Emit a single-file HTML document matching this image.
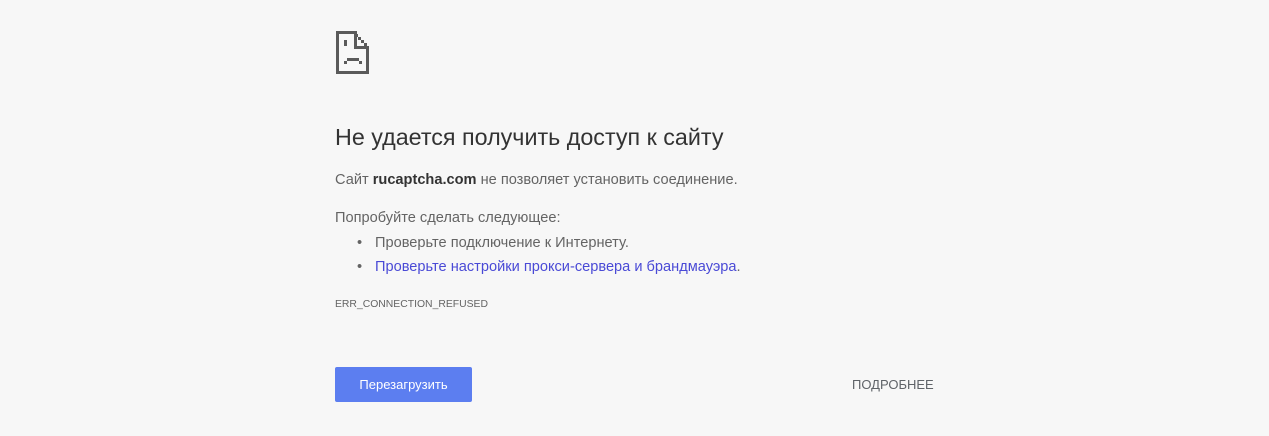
<!DOCTYPE html>
<html><head><meta charset="utf-8"><style>
body{margin:0;background:#f7f7f7;width:1269px;height:436px;overflow:hidden;font-family:"Liberation Sans",sans-serif;color:#646464;position:relative}
.a{position:absolute;white-space:nowrap}
h1{position:absolute;left:335px;top:124px;margin:0;font-weight:normal;font-size:23.3px;color:#333}
.t{font-size:14.6px}
a{color:#4a4ad6;text-decoration:none}
.btn{position:absolute;left:335px;top:367px;width:137px;height:35px;background:#5c7ef0;border-radius:2px;color:#fff;font-size:13px;text-align:center;line-height:35px}
</style></head><body>
<svg class="a" style="left:0;top:0" width="400" height="90">
<g fill="#5a5a5a">
<rect x="336" y="31" width="3" height="43"/>
<rect x="336" y="31" width="19" height="3"/>
<rect x="355" y="34" width="3" height="3"/>
<rect x="358" y="37" width="3" height="3"/>
<rect x="361" y="40" width="3" height="3"/>
<rect x="364" y="43" width="3" height="3"/>
<rect x="354" y="31" width="3" height="18"/>
<rect x="354" y="46" width="12" height="3"/>
<rect x="366" y="46" width="3" height="28"/>
<rect x="336" y="71" width="33" height="3"/>
<rect x="344" y="40" width="3" height="6"/>
<rect x="347" y="58" width="12" height="3"/>
<rect x="344" y="61" width="3" height="3"/>
<rect x="359" y="61" width="3" height="3"/>
</g></svg>
<h1>Не удается получить доступ к сайту</h1>
<div class="a t" style="left:335px;top:172px">Сайт <b style="color:#333">rucaptcha.com</b> не позволяет установить соединение.</div>
<div class="a t" style="left:335px;top:210px">Попробуйте сделать следующее:</div>
<div class="a t" style="left:357px;top:235px">•</div>
<div class="a t" style="left:375px;top:235px">Проверьте подключение к Интернету.</div>
<div class="a t" style="left:357px;top:259px">•</div>
<div class="a t" style="left:375px;top:259px"><a>Проверьте настройки прокси-сервера и брандмауэра</a>.</div>
<div class="a" style="left:335px;top:299px;font-size:10.4px">ERR_CONNECTION_REFUSED</div>
<div class="btn">Перезагрузить</div>
<div class="a" style="left:852px;top:377px;font-size:13px;color:#5f6368">ПОДРОБНЕЕ</div>
</body></html>
